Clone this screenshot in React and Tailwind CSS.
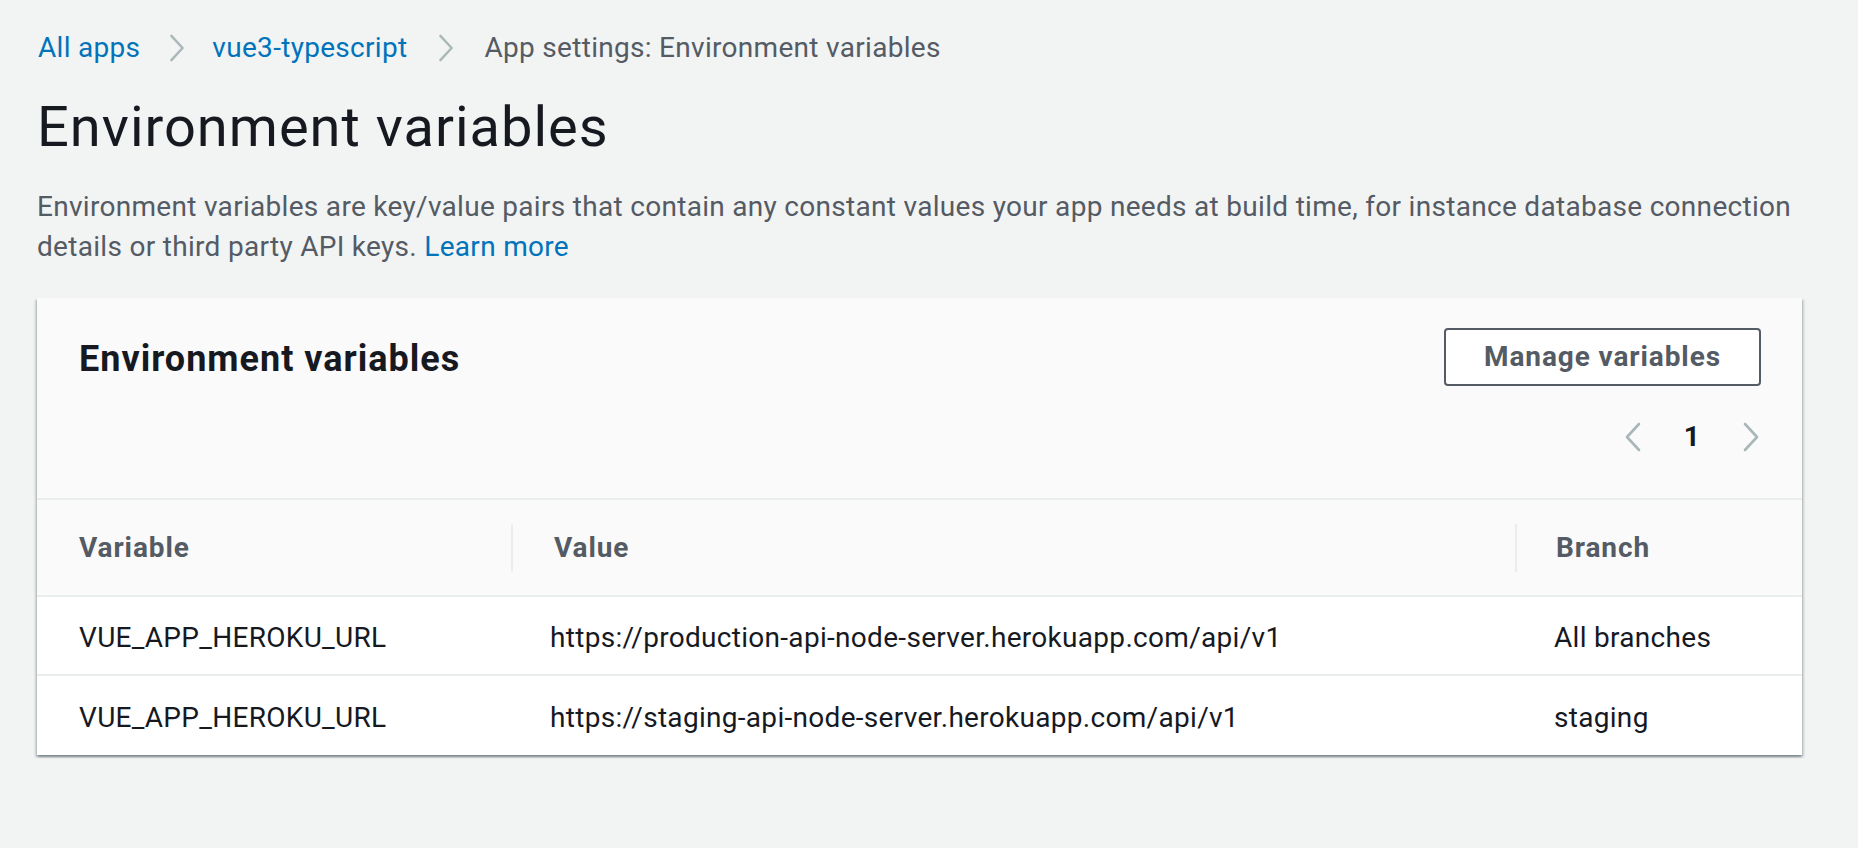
import React from 'react';

const Chevron = ({ dir = 'right', className = '' }) => (
  <svg viewBox="0 0 18 30" className={className} fill="none" stroke="currentColor" strokeWidth="2.6" strokeLinecap="round" strokeLinejoin="round">
    {dir === 'right' ? <path d="M3 2 L15 15 L3 28" /> : <path d="M15 2 L3 15 L15 28" />}
  </svg>
);

const rows = [
  { name: 'VUE_APP_HEROKU_URL', value: 'https://production-api-node-server.herokuapp.com/api/v1', branch: 'All branches' },
  { name: 'VUE_APP_HEROKU_URL', value: 'https://staging-api-node-server.herokuapp.com/api/v1', branch: 'staging' },
];

export default function App() {
  return (
    <div className="min-h-screen bg-[#f2f3f3] pl-[37px] pr-[56px] pt-[28px] font-['Roboto',sans-serif] text-[#16191f] tracking-[0.3px]">
      {/* breadcrumbs */}
      <nav className="flex items-center h-[40px] text-[28px] leading-[40px]">
        <a className="text-[#0073bb] pl-[1px]">All apps</a>
        <Chevron className="w-[18px] h-[28px] text-[#aab7b8] ml-[28px] mr-[26px]" />
        <a className="text-[#0073bb]">vue3-typescript</a>
        <Chevron className="w-[18px] h-[28px] text-[#aab7b8] ml-[30px] mr-[29px]" />
        <span className="text-[#545b64]">App settings: Environment variables</span>
      </nav>

      <h1 className="mt-[27px] text-[56px] leading-[64px] font-normal tracking-[1px]">Environment variables</h1>

      <p className="mt-[28px] text-[28px] leading-[40px] text-[#545b64]">
        Environment variables are key/value pairs that contain any constant values your app needs at build time, for instance database connection
        <br />
        details or third party API keys. <a className="text-[#0073bb]">Learn more</a>
      </p>

      <div className="mt-[31px] w-[1765px] bg-white shadow-[0_2px_2px_0_rgba(0,28,36,0.3),2px_2px_2px_0_rgba(0,28,36,0.15),-2px_2px_2px_0_rgba(0,28,36,0.15)]">
        <div className="bg-[#fafafa] px-[41px] pt-[30px] pb-[45px] border-b-2 border-[#eaeded]">
          <div className="flex items-center justify-between">
            <h2 className="text-[36px] leading-[48px] font-bold pl-[1px] pt-[4px] tracking-[1px]">Environment variables</h2>
            <button className="h-[58px] px-[38px] border-2 border-[#545b64] rounded-[4px] bg-white text-[28px] font-bold text-[#545b64] tracking-[0.9px]">
              Manage variables
            </button>
          </div>
          <div className="mt-[35px] flex items-center justify-end gap-[42px] h-[32px]">
            <Chevron dir="left" className="w-[18px] h-[30px] text-[#aab7b8]" />
            <span className="text-[28px] font-bold leading-[32px]">1</span>
            <Chevron className="w-[18px] h-[30px] text-[#aab7b8] mr-[1px]" />
          </div>
        </div>

        <div className="grid grid-cols-[474px_1004px_1fr] bg-[#fafafa] h-[97px] items-center border-b-2 border-[#eaeded] text-[28px] font-bold text-[#545b64] tracking-[0.9px]">
          <div className="pl-[42px]">Variable</div>
          <div className="pl-[41px] border-l-2 border-[#eaeded] h-[48px] flex items-center">Value</div>
          <div className="pl-[39px] border-l-2 border-[#eaeded] h-[48px] flex items-center">Branch</div>
        </div>

        {rows.map((r, i) => (
          <div
            key={i}
            className={`grid grid-cols-[474px_1004px_1fr] h-[79px] pt-[4px] items-center text-[28px] ${i < rows.length - 1 ? 'border-b-2 border-[#eaeded]' : ''}`}
          >
            <div className="pl-[42px]">{r.name}</div>
            <div className="pl-[39px]">{r.value}</div>
            <div className="pl-[39px]">{r.branch}</div>
          </div>
        ))}
      </div>
    </div>
  );
}
